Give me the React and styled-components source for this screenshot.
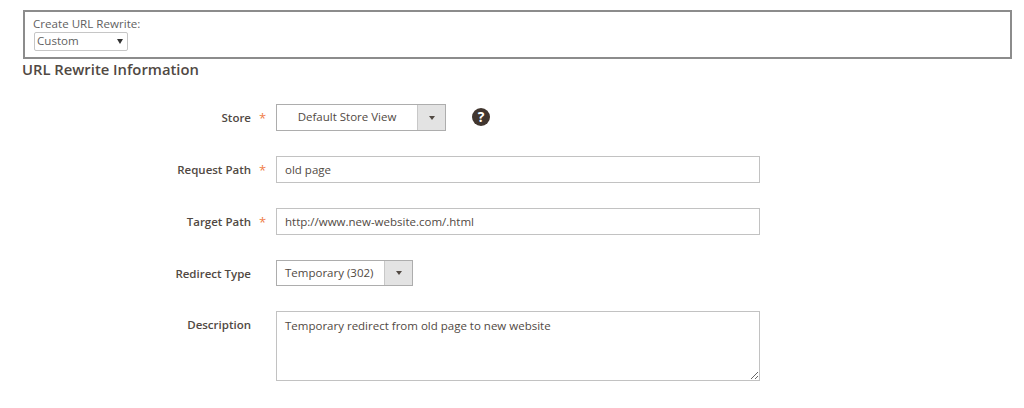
import React from "react";
import styled, { createGlobalStyle } from "styled-components";

const GlobalStyle = createGlobalStyle`
  html, body {
    margin: 0;
    padding: 0;
    background: #fff;
    font-family: "Open Sans", sans-serif;
    color: #514943;
  }
`;

const Page = styled.div`
  width: 1024px;
  height: 408px;
  overflow: hidden;
  padding: 10px 12px 0 22px;
  box-sizing: border-box;
`;

const TopBox = styled.div`
  margin-left: 1px;
  height: 49px;
  box-sizing: border-box;
  border: 2px solid #8c8c8c;
  padding: 4px 8px;
  font-size: 11.6px;
  line-height: 16px;
  color: #5f5f5f;
`;

const TopSelect = styled.div`
  width: 94px;
  height: 19px;
  margin-left: 1px;
  box-sizing: border-box;
  border: 1px solid #c6c6c6;
  border-radius: 2px;
  padding: 0 0 1px 2px;
  display: flex;
  align-items: center;
  justify-content: space-between;
  font-size: 11.6px;
  color: #5f5f5f;
`;

const TinyArrow = styled.span`
  width: 0;
  height: 0;
  margin: 0 4px 0 0;
  border-left: 3px solid transparent;
  border-right: 3px solid transparent;
  border-top: 5px solid #333;
`;

const Heading = styled.h2`
  margin: 1px 0 0;
  font-size: 14.8px;
  line-height: 19px;
  font-weight: 600;
  color: #514943;
`;

const Form = styled.div`
  display: flex;
  flex-direction: column;
  gap: 25px;
  margin-top: 25px;
`;

const Row = styled.div`
  display: flex;
  align-items: flex-start;
`;

const Label = styled.label`
  width: 229px;
  height: 26px;
  text-align: right;
  font-size: 11.5px;
  font-weight: 600;
  line-height: 27px;
  color: #514943;
`;

const Star = styled.span`
  width: 25px;
  height: 26px;
  padding-left: 8px;
  box-sizing: border-box;
  font-size: 13px;
  line-height: 29px;
  color: #eb5202;
  opacity: 0.75;
`;

const Gutter = styled.span`
  width: 25px;
`;

const SelectBox = styled.div`
  width: ${(p) => p.$w}px;
  height: ${(p) => p.$h}px;
  box-sizing: border-box;
  border: 1px solid #adadad;
  display: flex;
  font-size: 11.5px;
  color: #514943;
`;

const SelectValue = styled.div`
  flex: 1;
  display: flex;
  align-items: center;
  justify-content: ${(p) => (p.$center ? "center" : "flex-start")};
  padding: 0 8px 2px;
`;

const SelectAction = styled.div`
  width: 27px;
  background: #e3e3e3;
  border-left: 1px solid #c8c8c8;
  display: flex;
  align-items: center;
  justify-content: center;
`;

const SelectArrow = styled.span`
  width: 0;
  height: 0;
  border-left: 3px solid transparent;
  border-right: 3px solid transparent;
  border-top: 4px solid #514943;
`;

const Help = styled.span`
  width: 18px;
  height: 18px;
  margin: 4px 0 0 26px;
  border-radius: 50%;
  background: #41362f;
  color: #fff;
  font-size: 14px;
  font-weight: 700;
  line-height: 18px;
  text-align: center;
`;

const TextInput = styled.input`
  width: 484px;
  height: 27px;
  box-sizing: border-box;
  border: 1px solid #c2c2c2;
  border-radius: 0;
  outline: none;
  padding: 0 8px 1px;
  font-family: "Open Sans", sans-serif;
  font-size: 11.5px;
  color: #514943;
`;

const TextArea = styled.textarea`
  display: block;
  width: 484px;
  height: 70px;
  box-sizing: border-box;
  border: 1px solid #c2c2c2;
  border-radius: 0;
  outline: none;
  padding: 6px 8px;
  resize: both;
  font-family: "Open Sans", sans-serif;
  font-size: 11.5px;
  line-height: 16px;
  color: #514943;
`;

export default function App() {
  return (
    <Page>
      <GlobalStyle />
      <TopBox>
        Create URL Rewrite:
        <TopSelect>
          Custom
          <TinyArrow />
        </TopSelect>
      </TopBox>
      <Heading>URL Rewrite Information</Heading>
      <Form>
        <Row>
          <Label>Store</Label>
          <Star>*</Star>
          <SelectBox $w={170} $h={27}>
            <SelectValue $center>Default Store View</SelectValue>
            <SelectAction>
              <SelectArrow />
            </SelectAction>
          </SelectBox>
          <Help>?</Help>
        </Row>
        <Row>
          <Label>Request Path</Label>
          <Star>*</Star>
          <TextInput defaultValue="old page" />
        </Row>
        <Row>
          <Label>Target Path</Label>
          <Star>*</Star>
          <TextInput defaultValue="http://www.new-website.com/.html" />
        </Row>
        <Row>
          <Label>Redirect Type</Label>
          <Gutter />
          <SelectBox $w={137} $h={26}>
            <SelectValue>Temporary (302)</SelectValue>
            <SelectAction>
              <SelectArrow />
            </SelectAction>
          </SelectBox>
        </Row>
        <Row>
          <Label>Description</Label>
          <Gutter />
          <TextArea defaultValue="Temporary redirect from old page to new website" />
        </Row>
      </Form>
    </Page>
  );
}
